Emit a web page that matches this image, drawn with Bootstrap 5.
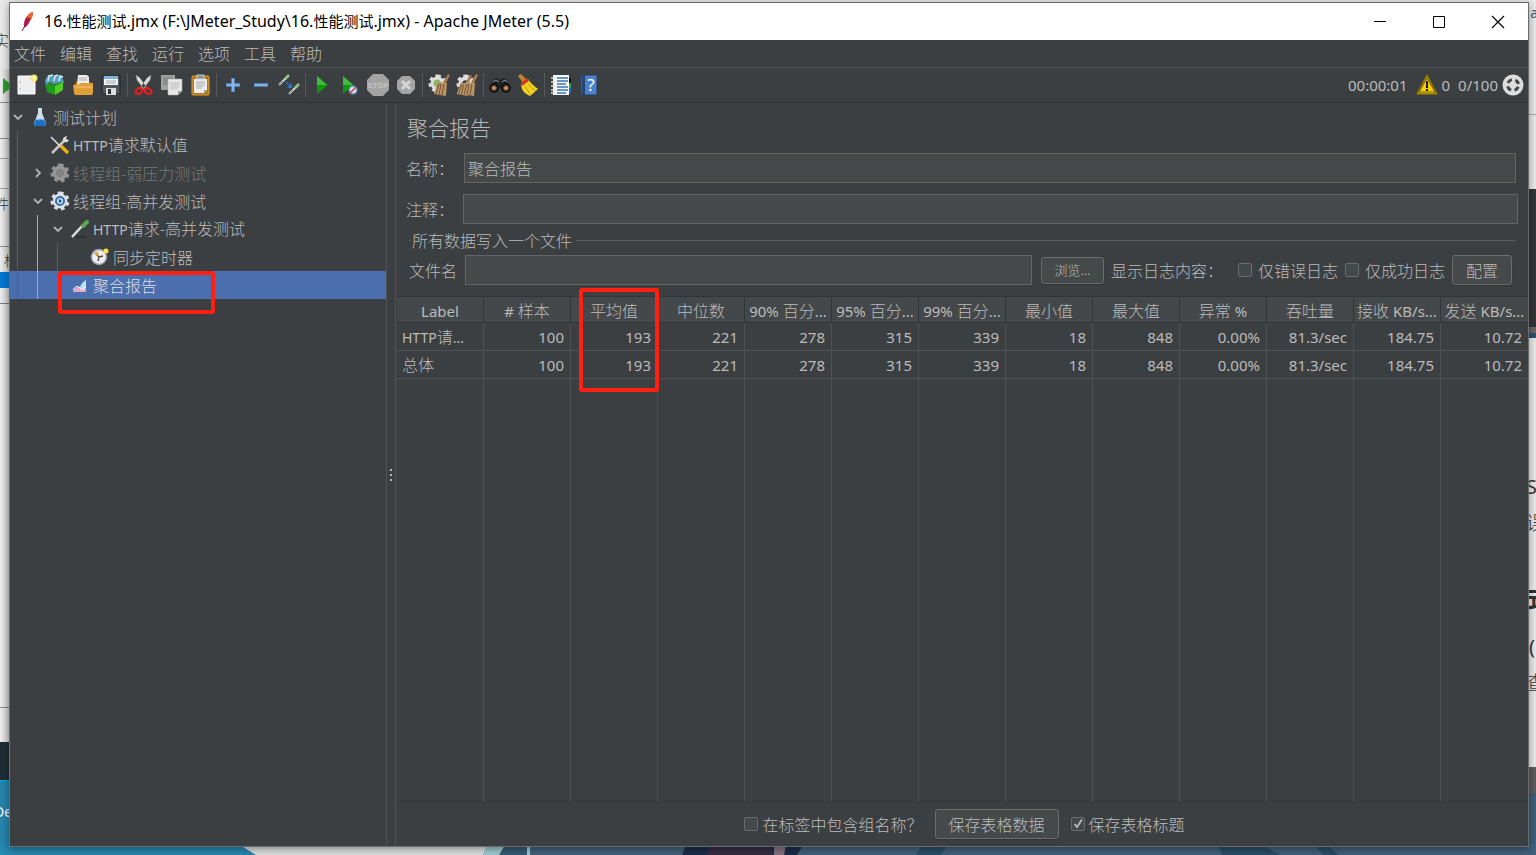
<!DOCTYPE html>
<html lang="zh-CN">
<head>
<meta charset="utf-8">
<meta name="viewport" content="width=device-width, initial-scale=1">
<title>16.性能测试.jmx - Apache JMeter (5.5)</title>
<link href="https://cdn.jsdelivr.net/npm/bootstrap@5.3.0/dist/css/bootstrap.min.css" rel="stylesheet">
<style>
:root { --panel: #3c3f41; --field: #45494a; --edge: #646464; --rule: #515151; --ink: #bbbbbb; }
body { font-family: "Noto Sans", "Noto Sans CJK SC", sans-serif; font-size: 16px; line-height: 24px; color: var(--ink); background: #e9e9ea; overflow: hidden; }
.han { font-family: "Noto Sans CJK SC", sans-serif; font-weight: 300; }
.lat { font-family: "Noto Sans", sans-serif; font-size: 15px; font-weight: 400; }
.tree .lat { font-size: 14px; }
.desk { position: absolute; inset: 0; overflow: hidden; z-index: 0; color: #333; }
.desk > * { position: absolute; }
.desk .strip-l { left: 0; width: 10px; }
.desk .strip-r { right: 0; width: 9px; }
.desk .word { white-space: nowrap; }
.desk .wall { left: 0; right: 0; bottom: 0; width: 100%; height: 10px; }
.app-window { position: relative; z-index: 1; height: calc(100vh - 10px); margin: 2px 7px 8px 9px; border: 1px solid #6a6c6d; background: var(--panel); box-shadow: 0 2px 8px rgba(0,0,0,.4); }
.titlebar { height: 37px; background: #fff; color: #000; font-size: 16px; padding: 0 1px 2px 10px; }
.titlebar .zh { font-size: 15px; font-family: "Noto Sans CJK SC", sans-serif; }
.win-btn { width: 59px; height: 35px; border: 0; background: none; padding: 0; }
.menubar { height: 28px; border-bottom: 1px solid var(--rule); gap: 14px; padding: 0 0 2px 4px; }
.menubar a { color: var(--ink); text-decoration: none; }
.toolbar { height: 35px; border-bottom: 1px solid #323232; padding-left: 3px; }
.tool { width: 28px; height: 28px; border: 0; background: none; padding: 0; flex: none; display: flex; align-items: center; justify-content: center; }
.sep { width: 1px; height: 24px; margin: 0 2px; background: #555759; flex: none; }
.tree { width: 376px; flex: none; }
.node { position: relative; height: 28px; padding-left: 2px; color: var(--ink); }
.node.chosen { background: #4b6eaf; color: #ddd; }
.node.off { color: #777; }
.twig { width: 20px; height: 28px; flex: none; position: relative; display: flex; align-items: center; justify-content: center; padding-right: 8px; }
.twig.guide::before { content: ""; position: absolute; left: 5px; top: 0; bottom: 0; width: 1px; background: #5a5d5f; }
.twig.lit::before { background: #79b9e8; }
.pic { width: 20px; height: 20px; flex: none; margin-left: -2px; margin-right: 3px; }
.splitter { width: 10px; flex: none; border: solid #515355; border-width: 0 1px; display: flex; align-items: center; justify-content: center; }
.marker { position: absolute; border: 4px solid #ff2012; border-radius: 3px; pointer-events: none; z-index: 3; }
.marker-tree { left: 48px; top: 0; width: 157px; height: 43px; }
.marker-col { left: 8px; top: -9px; width: 80px; height: 104px; }
.report-pane { padding-left: 1px; }
.heading { font-size: 21px; line-height: 32px; padding: 8px 0 10px 10px; margin: 0; font-weight: 300; }
.edit { height: 30px; background: var(--field); border: 1px solid var(--edge); color: var(--ink); padding: 0 3px; border-radius: 0; min-width: 0; outline: 0; font-weight: 300; }
.row-name { padding: 0 12px 0 9px; height: 30px; margin-bottom: 11px; }
.row-note { padding: 0 10px 0 9px; height: 30px; }
.w-lab { width: 58px; flex: none; }
.w-lab2 { width: 57px; flex: none; }
.file-head { font-size: 16px; height: 24px; padding: 0 12px; margin: 4px 0 3px; gap: 4px; }
.file-head::before { content: ""; width: 2px; height: 1px; background: #5a5b5c; margin-right: -3px; }
.file-head::after { content: ""; flex: 1; height: 1px; background: #5a5b5c; }
.file-row { height: 30px; padding: 0 16px 0 12px; margin-bottom: 11px; }
.push { border: 1px solid #6a6c6d; border-radius: 3px; background: #45494a; color: var(--ink); padding: 0; height: 30px; box-shadow: 0 1px 1px #313335; font-weight: 300; flex: none; }
.push-browse { width: 63px; height: 27px; font-size: 13px; margin-left: 9px; margin-right: 7px; }
.push-config { width: 60px; }
.push-save { width: 124px; margin: 0 12px; }
.choice { gap: 6px; margin-right: 7px; white-space: nowrap; }
.log-label { margin-right: 15px; white-space: nowrap; }
.tick { appearance: none; width: 14px; height: 14px; margin: 0; border: 1px solid #6b6b6b; border-radius: 2px; background: #43494a; flex: none; }
.tick:checked { background: #43494a url("data:image/svg+xml,%3Csvg xmlns='http://www.w3.org/2000/svg' viewBox='0 0 12 12'%3E%3Cpath d='M2.5 6l2.5 3L10 1.5' fill='none' stroke='%23bbb' stroke-width='1.8'/%3E%3C/svg%3E"); }
.report { table-layout: fixed; width: 100%; height: 100%; border-collapse: separate; border-spacing: 0; font-size: 15px; }
.report th, .report td { border-right: 1px solid var(--rule); border-bottom: 1px solid var(--rule); padding: 0 6px 0 5px; white-space: nowrap; }
.report th:last-child, .report td:last-child { border-right: 0; }
.report th { position: relative; height: 27px; background: #45484a; border-color: #323537; border-top: 1px solid #323537; font-weight: 400; text-align: center; line-height: 22px; padding: 2px 0 0; }
.report td { height: 28px; text-align: right; line-height: 24px; }
.report td:first-child { text-align: left; padding-right: 0; }
.report .rest td { height: auto; border-bottom-color: #323537; }
.report .han { font-size: 16px; line-height: 20px; }
.report td .lat { font-size: 14px; }
.footer-row { height: 44px; padding-left: 4px; }
</style>
</head>
<body>
<svg width="0" height="0" class="position-absolute" aria-hidden="true">
  <defs>
    <symbol id="gear" viewBox="0 0 20 20"><path fill="none" stroke="currentColor" stroke-width="3.4" stroke-dasharray="3.5 3.1" d="M10 2.2a7.8 7.8 0 1 1-.01 0"/><circle cx="10" cy="10" r="5.4" fill="none" stroke="currentColor" stroke-width="4"/></symbol>
    <symbol id="broom" viewBox="0 0 22 22"><path d="M20 0l2 1-4 8-3-1z" fill="#a87a4c"/><path d="M10 8l9 1-1 13-12-2z" fill="#b99468"/><path d="M11 10l-3 10M13 10l-2 11M16 10l-2 11" stroke="#76522e" fill="none"/></symbol>
    <symbol id="down" viewBox="0 0 10 10"><path d="M1 3l4 4 4-4" fill="none" stroke="#afb1b3" stroke-width="1.8"/></symbol>
    <symbol id="right" viewBox="0 0 10 10"><path d="M3 1l4 4-4 4" fill="none" stroke="#afb1b3" stroke-width="1.8"/></symbol>
  </defs>
</svg>

<!-- Desktop and windows showing behind the main window -->
<div class="desk" aria-hidden="true">
  <div class="strip-l" style="top:69px;height:673px;background:linear-gradient(90deg,#eee,#c9c9c9)"></div>
  <div class="strip-l" style="top:102px;height:1px;background:#888"></div>
  <div class="strip-l" style="top:138px;height:1px;background:#888"></div>
  <div class="strip-l" style="top:158px;height:1px;background:#999"></div>
  <div class="strip-l" style="top:188px;height:1px;background:#999"></div>
  <div class="strip-l" style="top:246px;height:1px;background:#888"></div>
  <div class="strip-l" style="top:272px;height:16px;background:#0078d4"></div>
  <div class="strip-l" style="top:303px;height:1px;background:#777"></div>
  <div class="strip-l" style="top:707px;height:1px;background:#888"></div>
  <div class="strip-l" style="top:742px;height:38px;background:#1e2d35"></div>
  <div class="strip-l" style="top:780px;height:75px;background:#2685ab;border-top:1px solid #00a5e8"></div>
  <svg style="left:3px;top:78px" width="8" height="17"><path d="M0 0l10 8-10 8z" fill="#2f9a2f"/></svg>
  <span class="word han" style="left:-6px;top:28px;font-size:15px">实</span>
  <span class="word han" style="left:-5px;top:191px;font-size:14px">件</span>
  <span class="word han" style="left:4px;top:248px;font-size:14px">标</span>
  <span class="word" style="left:-6px;top:800px;font-size:14px;color:#fff">De</span>
  <div class="strip-r" style="top:114px;height:1px;background:#aaa"></div>
  <div class="strip-r" style="top:189px;height:138px;background:#333436"></div>
  <div class="strip-r" style="top:327px;height:6px;background:#666"></div>
  <div class="strip-r" style="top:333px;height:5px;background:#2d506b"></div>
  <div class="strip-r" style="top:767px;height:26px;background:#5b5b5b"></div>
  <div class="strip-r" style="top:793px;height:62px;background:#3d5e78"></div>
  <span class="word" style="right:-2px;top:1px;font-size:14px;color:#456">a</span>
  <span class="word" style="right:-1px;top:475px;font-size:20px">S</span>
  <span class="word han" style="right:-9px;top:510px;font-size:19px">误</span>
  <span class="word han" style="right:-16px;top:585px;font-size:26px;font-weight:700">式</span>
  <span class="word" style="right:1px;top:635px;font-size:20px">(</span>
  <span class="word han" style="right:-9px;top:670px;font-size:19px">查</span>
  <svg class="wall" viewBox="0 0 1536 10" preserveAspectRatio="none">
    <path fill="#41607a" d="M0 0h1536v10H0z"/><path fill="#2788b0" d="M0 0h240l16 10H0z"/><path fill="#dcdfdd" d="M240 0h248l-5 10H256z"/><path fill="#9ccbd0" d="M488 0h42v10h-47z"/><path fill="#355a73" d="M505 0h22v10h-28z"/><path fill="#1c2c49" d="M686 0h117l-6 10H682z"/><path fill="#352d42" d="M710 0h62v10h-65z"/><path fill="#86717d" d="M774 0h12l-2 10h-10z"/><path fill="#294d68" d="M922 0h26l-8 10h-24zM1218 0h44l18 10h-58zM1315 0h12l12 10h-16z"/>
  </svg>
</div>

<div class="app-window d-flex flex-column">
  <header class="titlebar d-flex align-items-center flex-shrink-0">
    <svg width="16" height="22" viewBox="0 0 16 22" class="me-2"><path d="M4 18Q3 10 8 5q3-3 5-3 0 5-3 9-2 5-6 7z" fill="#c41e4a"/><path d="M7 7Q10 2 13 2q0 4-2 7z" fill="#ee6a25"/><path d="M2 21L9 8" stroke="#63244f" fill="none"/></svg>
    <span class="flex-grow-1">16.<span class="zh">性能测试</span>.jmx (F:\JMeter_Study\16.<span class="zh">性能测试</span>.jmx) - Apache JMeter (5.5)</span>
    <button class="win-btn" aria-label="最小化"><svg width="14" height="14"><path d="M1 6.500h12" stroke="#000"/></svg></button>
    <button class="win-btn" aria-label="最大化"><svg width="14" height="14"><path d="M1.500 1.500h11v11h-11z" fill="none" stroke="#000"/></svg></button>
    <button class="win-btn" aria-label="关闭"><svg width="14" height="14"><path d="M1 1l12 12M13 1L1 13" stroke="#000" stroke-width="1.200"/></svg></button>
  </header>

  <nav class="menubar han d-flex align-items-center flex-shrink-0">
    <a href="#">文件</a><a href="#">编辑</a><a href="#">查找</a><a href="#">运行</a><a href="#">选项</a><a href="#">工具</a><a href="#">帮助</a>
  </nav>

  <div class="toolbar d-flex align-items-center flex-shrink-0">
    <button class="tool" aria-label="新建"><svg width="22" height="22" viewBox="0 0 22 22"><path d="M2 2h17v18H2z" fill="#eee" stroke="#fff"/><path d="M4 7v2M4 14v2" stroke="#aaa"/><circle cx="18" cy="4" r="3.500" fill="#f6e96a"/><circle cx="18" cy="4" r="1.500" fill="#fffce0"/></svg></button>
    <button class="tool" aria-label="模板"><svg width="22" height="22" viewBox="0 0 22 22"><path d="M1 6l3-5 5 1 3-1 6 1 2 7-15 7-3-3z" fill="#4f9fbd"/><path d="M4 7l1-5 4-1M10 7l1-5 3-1M15 7l1-5 3 1" stroke="#d9ebf0" stroke-width="1.600" fill="none"/><path d="M2 11l9 1v9l-8-3z" fill="#1c9d18"/><path d="M11 12l8-4v8l-8 5z" fill="#52cc22"/><path d="M2 11l4-3 4 2 9-2-8 4z" fill="#2b8218"/></svg></button>
    <button class="tool" aria-label="打开"><svg width="22" height="22" viewBox="0 0 22 22"><path d="M2 11l3-4h12l3 4v8H2z" fill="#b87514"/><path d="M6 1h9l2 2v9H5z" fill="#eee"/><path d="M7 4h8M7 6h8" stroke="#aaa"/><path d="M1 11h5l2-2h13v10q0 2-2 2H4q-2 0-2-2z" fill="#dfa03a"/><path d="M3 13h17" stroke="#f3c673"/></svg></button>
    <button class="tool" aria-label="保存"><svg width="22" height="22" viewBox="0 0 22 22"><path d="M2 2h18v18H3l-1-2z" fill="#50575d" stroke="#222"/><path d="M4 2h14v9H4z" fill="#f1f4f6"/><path d="M4 2h14v3H4z" fill="#83b3dc"/><path d="M6 7h10M6 9h10" stroke="#aaa"/><path d="M6 14h10v7H6z" fill="#ddd"/><path d="M8 15h3v5H8z" fill="#333"/></svg></button>
    <i class="sep"></i>
    <button class="tool" aria-label="剪切"><svg width="22" height="22" viewBox="0 0 22 22"><path d="M3 1l4 3 7 10-3 1-7-9zM18 1l-4 3-7 10 3 1 7-9z" fill="#ddd" stroke="#888" stroke-width=".5"/><ellipse cx="6" cy="17" rx="3.600" ry="2.600" transform="rotate(-35 6 17)" fill="none" stroke="#df2020" stroke-width="2.400"/><ellipse cx="15" cy="17" rx="3.600" ry="2.600" transform="rotate(35 15 17)" fill="none" stroke="#df2020" stroke-width="2.400"/></svg></button>
    <button class="tool" aria-label="复制"><svg width="22" height="22" viewBox="0 0 22 22"><path d="M0 1h14v15H0z" fill="#a0a2a3"/><path d="M2 4h10M2 6h9M2 8h5M2 10h5" stroke="#777"/><path d="M7 5h14v12l-4 4H7z" fill="#e9e9e6" stroke="#aaa" stroke-width=".6"/><path d="M9 9h10M9 11h10M9 13h9M9 15h7" stroke="#bbb"/><path d="M21 17h-4v4z" fill="#999"/></svg></button>
    <button class="tool" aria-label="粘贴"><svg width="22" height="22" viewBox="0 0 22 22"><rect x="3" y="2" width="17" height="19" rx="1" fill="#b97415" stroke="#dca13d"/><path d="M5 5h13v11l-3 3H5z" fill="#eee"/><path d="M8 1h7v4H8z" fill="#8b8f91" stroke="#ccc"/><path d="M7 8h9M7 10h9M7 12h8M7 14h6" stroke="#aaa"/><path d="M18 16h-3v3z" fill="#999"/></svg></button>
    <i class="sep"></i>
    <button class="tool" aria-label="展开"><svg width="22" height="22" viewBox="0 0 22 22"><path d="M11 4v14M4 11h14" stroke="#5b93d5" stroke-width="3.500"/><path d="M11 5v12M5 11h12" stroke="#a9cdf3" stroke-width="1.200"/></svg></button>
    <button class="tool" aria-label="折叠"><svg width="22" height="22" viewBox="0 0 22 22"><path d="M4 11h14" stroke="#5b93d5" stroke-width="3.500"/><path d="M5 11h12" stroke="#a9cdf3" stroke-width="1"/></svg></button>
    <button class="tool" aria-label="启用或禁用"><svg width="22" height="22" viewBox="0 0 22 22"><path d="M1 11l9-9M11 20l9-9" stroke="#d5d8d3" stroke-width="2"/><path d="M7 5l4-4M17 14l4-4" stroke="#8fc285" stroke-width="2.600"/><path d="M1 11l4-4M11 20l4-4" stroke="#777"/><path d="M8 8l4 4" stroke="#2878d8" stroke-width="1.500"/><path d="M14 9v5H9z" fill="#2878d8"/></svg></button>
    <i class="sep"></i>
    <button class="tool" aria-label="启动"><svg width="22" height="22" viewBox="0 0 22 22"><path d="M6 2l11 9L6 20z" fill="#0c970c"/><path d="M6 2l10 9H6z" fill="#42b942"/></svg></button>
    <button class="tool" aria-label="无间隔启动"><svg width="22" height="22" viewBox="0 0 22 22"><path d="M4 2l11 9L4 20z" fill="#0c970c"/><path d="M4 2l10 9H4z" fill="#43b943"/><circle cx="14" cy="16" r="3.800" fill="#dce8f5" stroke="#6e9cd0" stroke-width="1.500"/><path d="M11 19l6-6" stroke="#dd2b2b" stroke-width="1.500"/></svg></button>
    <button class="tool" aria-label="停止" disabled><svg width="24" height="24" viewBox="0 0 24 24"><path d="M7 1h10l6 6v10l-6 6H7l-6-6V7z" fill="#a3a3a3"/><text x="12" y="15" text-anchor="middle" font-size="8" font-weight="700" font-family="Liberation Sans,sans-serif" fill="#c4c4c4">STOP</text></svg></button>
    <button class="tool" aria-label="关闭线程" disabled><svg width="22" height="22" viewBox="0 0 22 22"><path d="M7 2h8l5 5v8l-5 5H7l-5-5V7z" fill="#a5a5a5"/><path d="M7 7l8 8M15 7l-8 8" stroke="#d4d4d4" stroke-width="3"/></svg></button>
    <i class="sep"></i>
    <button class="tool" aria-label="清除"><svg width="22" height="22" viewBox="0 0 22 22" color="#dedede"><use href="#gear" x="0" y="0" width="19" height="19"/><circle cx="9" cy="9" r="3.500" fill="#8aba65"/><use href="#broom" width="22" height="22"/></svg></button>
    <button class="tool" aria-label="清除全部"><svg width="22" height="22" viewBox="0 0 22 22" color="#dedede"><use href="#gear" x="0" y="0" width="19" height="19"/><use href="#broom" x="-5" y="1" width="21" height="21"/><use href="#broom" width="22" height="22"/></svg></button>
    <i class="sep"></i>
    <button class="tool" aria-label="搜索"><svg width="22" height="22" viewBox="0 0 22 22"><path d="M1 13l4-8 4-1 1 2h2l1-2 4 1 4 8-3 6-7-5-7 5z" fill="#1f2223"/><path d="M4 8l3-2 3 2M13 8l3-2 2 2" stroke="#999" fill="none"/><circle cx="5" cy="14" r="3.800" fill="#8a5a40" stroke="#111" stroke-width="2"/><circle cx="17" cy="14" r="3.800" fill="#8a5a40" stroke="#111" stroke-width="2"/><circle cx="5" cy="14" r="1.600" fill="#d59a72"/><circle cx="17" cy="14" r="1.600" fill="#d59a72"/></svg></button>
    <button class="tool" aria-label="重置搜索"><svg width="22" height="22" viewBox="0 0 22 22"><path d="M1 2l3-2 6 6-4 3z" fill="#b98532"/><path d="M4 11l7-6q3 5 10 10l-8 7Q5 19 4 11z" fill="#f2d21d"/><path d="M4 9l6-5 2 3-7 5z" fill="#d43820"/><path d="M8 12l5 8M11 10l7 7" stroke="#b99b0e"/></svg></button>
    <i class="sep"></i>
    <button class="tool" aria-label="函数助手"><svg width="22" height="22" viewBox="0 0 22 22"><path d="M3 1h16v20H3z" fill="#f5f8fc"/><path d="M7 4h11M7 7h11M7 10h9M7 13h11M7 16h11M7 19h9" stroke="#3f74b5" stroke-width="1.300"/><path d="M1 4h4M1 8h4M1 12h4M1 16h4M1 19h4" stroke="#ddd" stroke-width="1.600"/><path d="M19 4h2v5h-2z" fill="#111"/><path d="M19 9h2v5h-2z" fill="#29a744"/><path d="M19 14h2v5h-2z" fill="#2368ca"/></svg></button>
    <button class="tool" aria-label="帮助"><svg width="22" height="22" viewBox="0 0 22 22"><path d="M3 1h16v20H3z" fill="#4a83c9" stroke="#243c60"/><path d="M4 1h3v20H4z" fill="#23456f"/><text x="13" y="17" text-anchor="middle" font-size="17" font-family="Noto Sans,sans-serif" fill="#fff">?</text></svg></button>
    <div class="lat ms-auto d-flex align-items-center">
      <span class="me-2">00:00:01</span>
      <svg width="22" height="22" viewBox="0 0 22 22"><path d="M11 1l10 19H1z" fill="#f5cd0b" stroke="#867007" stroke-width="1.500" stroke-linejoin="round"/><path d="M11 4l8 14H3z" fill="none" stroke="#4b4008" stroke-width=".8"/><path d="M11 7v7M11 15v2" stroke="#211c02" stroke-width="2"/></svg>
      <span class="ms-1 me-2">0</span><span class="me-1">0/100</span>
      <svg width="22" height="22" viewBox="0 0 22 22" class="me-1"><circle cx="11" cy="11" r="10.500" fill="#ddd"/><circle cx="11" cy="11" r="5.500" fill="none" stroke="#444" stroke-width="3" stroke-dasharray="5 3.640" stroke-dashoffset="-1.820"/></svg>
    </div>
  </div>

  <div class="d-flex flex-grow-1 overflow-hidden">
    <aside class="tree han">
      <div class="node d-flex align-items-center"><span class="twig"><svg width="10" height="10"><use href="#down"/></svg></span><svg class="pic" viewBox="0 0 20 20"><path d="M8 1h4v5l4 10q0 3-2 3H6q-2 0-2-3L8 6z" fill="#cfdde5"/><path d="M6 12h8l2 5q0 2-2 2H6q-2 0-2-2z" fill="#1c6fc4"/><path d="M6 12l3 1 2-1 3 1" stroke="#8ac4f2" fill="none"/></svg><span>测试计划</span></div>
      <div class="node d-flex align-items-center"><span class="twig guide"></span><span class="twig"></span><svg class="pic" viewBox="0 0 20 20"><path d="M2 18L15 5" stroke="#c8c8c0" stroke-width="2.500"/><path d="M13 6q-1-4 4-5l-1 3 3 1q-2 4-6 1z" fill="#ddd"/><path d="M1 2l10 10" stroke="#ddd" stroke-width="1.500"/><path d="M11 11l7 7" stroke="#edb018" stroke-width="3.500"/></svg><span><span class="lat">HTTP</span>请求默认值</span></div>
      <div class="node off d-flex align-items-center"><span class="twig guide"></span><span class="twig"><svg width="10" height="10"><use href="#right"/></svg></span><svg class="pic" viewBox="0 0 20 20" color="#959595"><use href="#gear"/><circle cx="10" cy="10" r="3.500" fill="#838383"/></svg><span>线程组-弱压力测试</span></div>
      <div class="node d-flex align-items-center"><span class="twig guide"></span><span class="twig"><svg width="10" height="10"><use href="#down"/></svg></span><svg class="pic" viewBox="0 0 20 20" color="#dde1e5"><use href="#gear"/><circle cx="10" cy="10" r="4" fill="#c7dcf1" stroke="#386fae" stroke-width="2"/><path d="M9 8l3 2-3 2z" fill="#174a84"/></svg><span>线程组-高并发测试</span></div>
      <div class="node d-flex align-items-center"><span class="twig guide"></span><span class="twig guide lit"></span><span class="twig"><svg width="10" height="10"><use href="#down"/></svg></span><svg class="pic" viewBox="0 0 20 20"><path d="M4 18h12" stroke="#2e3032" stroke-width="2"/><path d="M2 18L13 6" stroke="#dce0dc" stroke-width="2.500"/><path d="M13 7l4-4" stroke="#60a94e" stroke-width="4" stroke-linecap="round"/></svg><span><span class="lat">HTTP</span>请求-高并发测试</span></div>
      <div class="node d-flex align-items-center"><span class="twig guide"></span><span class="twig guide lit"></span><span class="twig guide"></span><span class="twig"></span><svg class="pic" viewBox="0 0 20 20"><circle cx="9" cy="10" r="7.500" fill="#eeeef2" stroke="#9a9ca8" stroke-width="1.500"/><path d="M5 6l4 4 4-1M9 10l-1 4" stroke="#514830" stroke-width="1.300" fill="none"/><path d="M4 7l4-3 1 5z" fill="#d8ae43"/><circle cx="16" cy="4" r="2.500" fill="#f8e83c"/></svg><span>同步定时器</span></div>
      <div class="node chosen d-flex align-items-center"><span class="twig guide"></span><span class="twig guide lit"></span><span class="twig"></span><svg class="pic" viewBox="0 0 20 20"><path d="M9 17Q10 8 16 5v12z" fill="#b9e4f5"/><path d="M3 17q2-5 6-5 3 3 7 0v5z" fill="#eaa5d1"/><path d="M3 15q3-5 6-3l3 3 4-3" stroke="#fff" fill="none"/></svg><span>聚合报告</span><div class="marker marker-tree"></div></div>
    </aside>
    <div class="splitter"><svg width="4" height="14" viewBox="0 0 4 14"><path d="M1 1h2v2H1zM1 6h2v2H1zM1 11h2v2H1z" fill="#b6b6b6"/></svg></div>

    <main class="report-pane flex-grow-1 d-flex flex-column overflow-hidden">
      <h1 class="heading han">聚合报告</h1>
      <div class="row-name han d-flex align-items-center"><label class="w-lab" for="rname">名称：</label><input id="rname" class="edit flex-grow-1" value="聚合报告"></div>
      <div class="row-note han d-flex align-items-center"><label class="w-lab2" for="rnote">注释：</label><input id="rnote" class="edit flex-grow-1"></div>
      <div class="file-head han d-flex align-items-center">所有数据写入一个文件</div>
      <div class="file-row han d-flex align-items-center">
        <label for="rfile" class="me-2">文件名</label><input id="rfile" class="edit flex-grow-1">
        <button class="push push-browse" type="button">浏览...</button>
        <span class="log-label">显示日志内容：</span>
        <span class="choice d-flex align-items-center"><input class="tick" type="checkbox" id="onlyerr"><label for="onlyerr">仅错误日志</label></span>
        <span class="choice d-flex align-items-center"><input class="tick" type="checkbox" id="onlyok"><label for="onlyok">仅成功日志</label></span>
        <button class="push push-config" type="button">配置</button>
      </div>
      <div class="flex-grow-1">
        <table class="report">
          <thead><tr>
            <th>Label</th><th># <span class="han">样本</span></th><th><span class="han">平均值</span><div class="marker marker-col"></div></th><th><span class="han">中位数</span></th><th>90% <span class="han">百分</span>...</th><th>95% <span class="han">百分</span>...</th><th>99% <span class="han">百分</span>...</th><th><span class="han">最小值</span></th><th><span class="han">最大值</span></th><th><span class="han">异常</span> %</th><th><span class="han">吞吐量</span></th><th><span class="han">接收</span> KB/s...</th><th><span class="han">发送</span> KB/s...</th>
          </tr></thead>
          <tbody>
            <tr><td><span class="han"><span class="lat">HTTP</span>请<span class="lat">...</span></span></td><td>100</td><td>193</td><td>221</td><td>278</td><td>315</td><td>339</td><td>18</td><td>848</td><td>0.00%</td><td>81.3/sec</td><td>184.75</td><td>10.72</td></tr>
            <tr><td><span class="han">总体</span></td><td>100</td><td>193</td><td>221</td><td>278</td><td>315</td><td>339</td><td>18</td><td>848</td><td>0.00%</td><td>81.3/sec</td><td>184.75</td><td>10.72</td></tr>
            <tr class="rest"><td></td><td></td><td></td><td></td><td></td><td></td><td></td><td></td><td></td><td></td><td></td><td></td><td></td></tr>
          </tbody>
        </table>
      </div>
      <div class="footer-row han d-flex align-items-center justify-content-center flex-shrink-0">
        <span class="d-flex align-items-center gap-1"><input class="tick" type="checkbox" id="grp"><label for="grp">在标签中包含组名称？</label></span>
        <button class="push push-save" type="button">保存表格数据</button>
        <span class="d-flex align-items-center gap-1"><input class="tick" type="checkbox" id="hdr" checked><label for="hdr">保存表格标题</label></span>
      </div>
    </main>
  </div>
</div>
<script src="https://cdn.jsdelivr.net/npm/bootstrap@5.3.0/dist/js/bootstrap.bundle.min.js"></script>
</body>
</html>
